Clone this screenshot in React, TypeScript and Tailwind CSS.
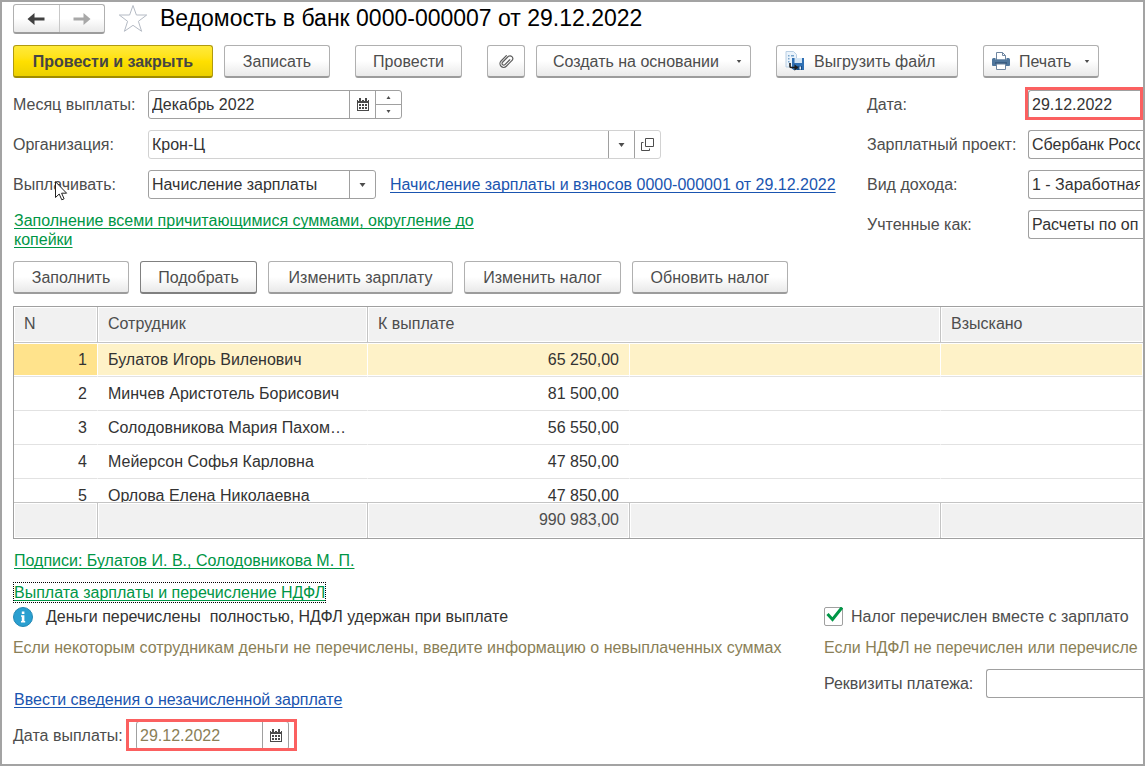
import type { ButtonHTMLAttributes, ReactNode } from 'react';
import clsx from 'clsx';

const employees = [
  { id: 1, name: 'Булатов Игорь Виленович', amount: '65 250,00' },
  { id: 2, name: 'Минчев Аристотель Борисович', amount: '81 500,00' },
  { id: 3, name: 'Солодовникова Мария Пахомовна', amount: '56 550,00' },
  { id: 4, name: 'Мейерсон Софья Карловна', amount: '47 850,00' },
  { id: 5, name: 'Орлова Елена Николаевна', amount: '47 850,00' },
];

const linkBase = 'underline decoration-1 underline-offset-2 [text-decoration-skip-ink:none]';
const greenLink = clsx(linkBase, 'text-[#009646]');
const blueLink = clsx(linkBase, 'text-[#1a55b0]');
const fieldBox = 'flex h-[29px] rounded-[3px] border border-[#a0a0a0] bg-white';
const openField = 'h-[29px] w-full min-w-0 rounded-l-[3px] border border-r-0 border-[#a0a0a0] bg-white px-[3px] outline-none';
const headCell = 'h-[36px] border-b border-[#c4c4c4] bg-[#f1f1f1] px-[10px] pb-[2px] text-left font-normal shadow-[inset_0_0_0_1px_#fff]';
const plain = 'border-[#b0b0b0] border-b-[#9c9c9c] bg-linear-to-b from-white from-50% to-[#e9e9e9]';
const active = 'border-[#808080] bg-linear-to-b from-white from-50% to-[#e9e9e9]';
const primary = 'border-[#b09a10] border-b-[#a08c00] bg-linear-to-b from-[#ffea38] via-[#ffe000] to-[#ecd000] font-bold text-[#454545]';

function ToolButton({ children, className, look = plain, ...rest }: ButtonHTMLAttributes<HTMLButtonElement> & { look?: string }) {
  return (
    <button
      type="button"
      className={clsx('flex h-[33px] shrink-0 items-center justify-center rounded-[3px] border border-b-2 whitespace-nowrap', look, className)}
      {...rest}
    >
      {children}
    </button>
  );
}

function Caret({ small }: { small?: boolean }) {
  return (
    <svg width={small ? 6 : 7} height={small ? 3 : 4} viewBox="0 0 7 4" aria-hidden="true">
      <path d="M0.5 0h6L3.5 4z" fill="#4d4d4d" />
    </svg>
  );
}

function CalendarIcon() {
  return (
    <svg width="12" height="13" viewBox="0 0 12 13" shapeRendering="crispEdges" aria-hidden="true">
      <path d="M0 2h12v11H0z" fill="#4a4a4a" />
      <path d="M1 5h10v7H1z" fill="#fff" />
      <path d="M2 0h2v2H2zM8 0h2v2H8z" fill="#4a4a4a" />
      <path d="M1 2h1v1H1zM4 2h1v1H4zM7 2h1v1H7zM10 2h1v1h-1z" fill="#fff" />
      <path d="M2 6h2v2H2zM5 6h2v2H5zM8 6h2v2H8zM2 9h2v2H2zM5 9h2v2H5zM8 9h2v2H8z" fill="#4a4a4a" />
    </svg>
  );
}

function ArrowIcon({ className }: { className: string }) {
  return (
    <svg width="18" height="14" viewBox="0 0 18 14" className={className} aria-hidden="true">
      <path d="M0.500 7l7-6v4.500h10v3h-10V13z" fill="currentColor" />
    </svg>
  );
}

function ClipIcon() {
  return (
    <svg width="18" height="18" viewBox="0 0 18 18" fill="none" stroke="#5c5c5c" strokeWidth="1.2" strokeLinecap="round" aria-hidden="true">
      <g transform="rotate(45 9 9)">
        <path d="M5.500 5v7.500a3.700 3.700 0 0 0 7.400 0V4a2.800 2.800 0 0 0-5.500 0v8.300a1.700 1.700 0 0 0 3.400 0V5.500" />
      </g>
    </svg>
  );
}

function ExportIcon() {
  return (
    <svg width="20" height="20" viewBox="0 0 20 20" aria-hidden="true">
      <path d="M1 0.500h7.500l3 3V16H1z" fill="#eaf3fb" stroke="#b9cfe4" />
      <path d="M3 4h1.500v1.500H3zM3 7h1.500v1.500H3zM3 10h1.500v1.500H3zM6 4h3v1.500H6z" fill="#7aa5cc" />
      <path d="M7 7h12v12H8.500L7 17.500z" fill="#2f6fb3" />
      <path d="M9.500 7h7.500v5H9.500z" fill="#d5e6f5" />
      <path d="M12 15h5v4h-5z" fill="#174a80" />
      <path d="M14.500 15.500h1.500v3h-1.500z" fill="#dfeaf5" />
      <path d="M5 12v3.500a1 1 0 0 0 1 1h4" fill="none" stroke="#1c1c1c" strokeWidth="1.600" />
      <path d="M9.500 13.200l3.800 3.300-3.800 3.300z" fill="#1c1c1c" />
    </svg>
  );
}

function PrinterIcon() {
  return (
    <svg width="18" height="18" viewBox="0 0 18 18" aria-hidden="true">
      <path d="M4.500 8V0.500h6l3 3V8z" fill="#fff" stroke="#6f86a0" />
      <path d="M10.500 0.500v3h3" fill="none" stroke="#6f86a0" />
      <path d="M1.500 6h2v1.500h11V6h2a1.500 1.500 0 0 1 1.500 1.500V13a1 1 0 0 1-1 1H1a1 1 0 0 1-1-1V7.500A1.500 1.500 0 0 1 1.500 6z" fill="#4f769c" />
      <path d="M3 11h12" stroke="#27476b" />
      <path d="M4.500 12h9v5.500h-9z" fill="#fff" stroke="#6f86a0" />
    </svg>
  );
}

function Field({ id, label, children }: { id: string; label: string; children: ReactNode }) {
  return (
    <div className="flex h-[29px] items-center">
      <label htmlFor={id} className="w-[135px] shrink-0 whitespace-nowrap">{label}</label>
      {children}
    </div>
  );
}

function SideField({ id, label, value, marked }: { id: string; label: string; value: string; marked?: boolean }) {
  return (
    <div className="flex h-[29px] items-center">
      <label htmlFor={id} className="w-[161px] shrink-0 whitespace-nowrap">{label}</label>
      <div className="relative min-w-0 flex-1 text-[#333]">
        <input id={id} defaultValue={value} className={openField} />
        {marked && <span className="pointer-events-none absolute -top-[3px] right-0 -bottom-px -left-[3px] border-3 border-[#fb6060]" />}
      </div>
    </div>
  );
}

export default function App() {
  return (
    <main className="relative min-h-screen overflow-hidden border-2 border-[#a3a3a3] bg-white pl-[11px] font-['Liberation_Sans',Arial,sans-serif] text-[16px] leading-[19px] text-[#4d4d4d]">
      <header className="flex h-[32px] items-start pt-[2px]">
        <div className={clsx('flex h-[30px] w-[92px] shrink-0 rounded-[3px] border border-b-2', plain)}>
          <button type="button" aria-label="Назад" className="flex flex-1 items-center justify-center border-r border-[#c8c8c8]">
            <ArrowIcon className="text-[#404040]" />
          </button>
          <button type="button" aria-label="Вперед" className="flex flex-1 items-center justify-center">
            <ArrowIcon className="rotate-180 text-[#a8a8a8]" />
          </button>
        </div>
        <button type="button" aria-label="В избранное" className="mr-3 ml-[13px]">
          <svg width="30" height="29" viewBox="0 0 30 29" fill="none" stroke="#b4bac4" aria-hidden="true">
            <path d="M15 1.500l3.400 9.500h10.300l-8.300 6.300 3.200 10L15 21.300l-8.600 6 3.200-10L1.300 11h10.300z" />
          </svg>
        </button>
        <h1 className="text-[23px] leading-[28px] whitespace-nowrap text-black">Ведомость в банк 0000-000007 от 29.12.2022</h1>
      </header>

      <div className="mt-[11px] flex">
        <ToolButton look={primary} className="w-[200px]">Провести и закрыть</ToolButton>
        <ToolButton className="ml-[11px] w-[106px]">Записать</ToolButton>
        <ToolButton className="ml-[25px] w-[107px]">Провести</ToolButton>
        <ToolButton aria-label="Присоединенные файлы" className="ml-[25px] w-[38px]">
          <ClipIcon />
        </ToolButton>
        <ToolButton className="ml-[11px] w-[215px] pr-2 pl-4">
          <span className="flex-1 text-left">Создать на основании</span>
          <Caret small />
        </ToolButton>
        <ToolButton className="ml-[25px] w-[182px] gap-[9px] px-2">
          <ExportIcon />
          <span className="flex-1 text-left">Выгрузить файл</span>
        </ToolButton>
        <ToolButton className="ml-[25px] w-[116px] gap-[9px] px-2">
          <PrinterIcon />
          <span className="flex-1 text-left">Печать</span>
          <Caret small />
        </ToolButton>
      </div>

      <section className="mt-3 grid grid-cols-[854px_minmax(0,1fr)]">
        <div className="flex flex-col gap-[11px]">
          <Field id="month" label="Месяц выплаты:">
            <div className={clsx(fieldBox, 'w-[254px] text-[#333]')}>
              <input id="month" defaultValue="Декабрь 2022" className="min-w-0 flex-1 px-[3px] outline-none" />
              <button type="button" aria-label="Выбрать месяц" className="flex w-[26px] items-center justify-center border-l border-[#a0a0a0]">
                <CalendarIcon />
              </button>
              <div className="flex w-[26px] flex-col border-l border-[#a0a0a0]">
                <button type="button" aria-label="Следующий месяц" className="flex flex-1 items-center justify-center border-b border-[#a0a0a0]">
                  <svg width="5" height="3" viewBox="0 0 5 3" aria-hidden="true"><path d="M0.500 3h4L2.500 0z" fill="#4d4d4d" /></svg>
                </button>
                <button type="button" aria-label="Предыдущий месяц" className="flex flex-1 items-center justify-center">
                  <svg width="5" height="3" viewBox="0 0 5 3" aria-hidden="true"><path d="M0.500 0h4L2.500 3z" fill="#4d4d4d" /></svg>
                </button>
              </div>
            </div>
          </Field>
          <Field id="org" label="Организация:">
            <div className="flex h-[29px] w-[513px] rounded-[3px] border border-[#d2d2d2] text-[#333]">
              <div className="relative flex-1">
                <select id="org" className="h-full w-full appearance-none px-[3px] outline-none">
                  <option>Крон-Ц</option>
                </select>
                <span className="pointer-events-none absolute inset-y-0 right-0 flex w-[26px] items-center justify-center border-l border-[#a0a0a0]">
                  <Caret />
                </span>
              </div>
              <button type="button" aria-label="Открыть организацию" className="flex w-[26px] items-center justify-center border-l border-[#a0a0a0]">
                <svg width="13" height="13" viewBox="0 0 13 13" fill="none" stroke="#4d4d4d" aria-hidden="true">
                  <path d="M4.500 0.500h8v8h-8zM2.500 4.500h-2v8h8v-2" />
                </svg>
              </button>
            </div>
          </Field>
          <Field id="pay" label="Выплачивать:">
            <div className={clsx(fieldBox, 'relative w-[228px] shrink-0 text-[#333]')}>
              <select id="pay" className="h-full w-full appearance-none px-[3px] outline-none">
                <option>Начисление зарплаты</option>
              </select>
              <span className="pointer-events-none absolute inset-y-0 right-0 flex w-[26px] items-center justify-center border-l border-[#a0a0a0]">
                <Caret />
              </span>
            </div>
            <a href="#accrual" className={clsx(blueLink, 'ml-[14px] whitespace-nowrap')}>
              Начисление зарплаты и взносов 0000-000001 от 29.12.2022
            </a>
          </Field>
          <p className="w-[500px] pt-px pl-px">
            <a href="#filling" className={greenLink}>Заполнение всеми причитающимися суммами, округление до копейки</a>
          </p>
        </div>
        <div className="flex flex-col gap-[11px]">
          <SideField id="date" label="Дата:" value="29.12.2022" marked />
          <SideField id="project" label="Зарплатный проект:" value="Сбербанк Росс" />
          <SideField id="income" label="Вид дохода:" value="1 - Заработная" />
          <SideField id="account" label="Учтенные как:" value="Расчеты по оп" />
        </div>
      </section>

      <div className="mt-3 flex gap-[11px]">
        <ToolButton className="w-[116px]">Заполнить</ToolButton>
        <ToolButton look={active} className="w-[117px]">Подобрать</ToolButton>
        <ToolButton className="w-[185px]">Изменить зарплату</ToolButton>
        <ToolButton className="w-[157px]">Изменить налог</ToolButton>
        <ToolButton className="w-[156px]">Обновить налог</ToolButton>
      </div>

      <div className="mt-3 h-[233px] overflow-hidden border border-r-0 border-[#a0a0a0]">
        <table className="w-full table-fixed border-separate border-spacing-0">
          <colgroup>
            <col className="w-[84px]" />
            <col className="w-[270px]" />
            <col className="w-[262px]" />
            <col className="w-[311px]" />
            <col />
          </colgroup>
          <thead>
            <tr>
              <th className={clsx(headCell, 'border-r')}>N</th>
              <th className={clsx(headCell, 'border-r')}>Сотрудник</th>
              <th colSpan={2} className={clsx(headCell, 'border-r')}>К выплате</th>
              <th className={headCell}>Взыскано</th>
            </tr>
          </thead>
          <tbody className="text-[#333]">
            {employees.map((row, i) => {
              const cell = clsx(
                'h-[34px] border-r border-b border-b-[#e2e2e2] border-r-white',
                i === 0 && 'bg-[#fef2c8] shadow-[inset_0_1px_0_#fff,inset_0_-1px_0_#fff]',
              );
              return (
                <tr key={row.id}>
                  <td className={clsx(cell, 'px-[10px] text-right', i === 0 && 'bg-[#ffe38c]')}>{row.id}</td>
                  <td className={clsx(cell, 'truncate pr-4 pl-[10px]')}>{row.name}</td>
                  <td className={clsx(cell, 'px-[10px] text-right')}>{row.amount}</td>
                  <td className={cell} />
                  <td className={cell} />
                </tr>
              );
            })}
          </tbody>
          <tfoot>
            <tr>
              {['', '', '990 983,00', '', ''].map((total, i) => (
                <td
                  key={i}
                  className={clsx(
                    'sticky bottom-0 h-[36px] border-t border-[#c4c4c4] bg-[#f1f1f1] px-[10px] pb-[2px] text-right shadow-[inset_0_0_0_1px_#fff]',
                    i < 4 && 'border-r',
                  )}
                >
                  {total}
                </td>
              ))}
            </tr>
          </tfoot>
        </table>
      </div>

      <p className="mt-3 pl-px">
        <a href="#signatures" className={greenLink}>Подписи: Булатов И. В., Солодовникова М. П.</a>
      </p>
      <p className="mt-3 flex">
        <a href="#ndfl" className={clsx(greenLink, 'border border-dotted border-black')}>Выплата зарплаты и перечисление НДФЛ</a>
      </p>

      <section className="mt-[3px] grid grid-cols-[811px_minmax(0,1fr)]">
        <div>
          <div className="flex h-[21px] items-center gap-[13px] text-[#333]">
            <svg width="20" height="20" viewBox="0 0 20 20" aria-hidden="true">
              <circle cx="10" cy="10" r="9.500" fill="#2a9fd0" stroke="#2488b4" />
              <path d="M8.800 4.500h2.600v2.400H8.800zM8 8.300h3.400v5.700h.8v1.500H8V14h.8V9.800H8z" fill="#fff" />
            </svg>
            <span className="whitespace-pre">Деньги перечислены  полностью, НДФЛ удержан при выплате</span>
          </div>
          <p className="mt-[11px] whitespace-nowrap text-[#8a7f57]">
            Если некоторым сотрудникам деньги не перечислены, введите информацию о невыплаченных суммах
          </p>
          <p className="mt-[33px] pl-px">
            <a href="#unpaid" className={blueLink}>Ввести сведения о незачисленной зарплате</a>
          </p>
          <div className="mt-3 flex h-[29px] items-center">
            <label htmlFor="paydate" className="w-[123px] shrink-0 whitespace-nowrap">Дата выплаты:</label>
            <div className={clsx(fieldBox, 'relative w-[153px] text-[#8a7f57]')}>
              <input id="paydate" defaultValue="29.12.2022" className="min-w-0 flex-1 px-[3px] outline-none" />
              <button type="button" aria-label="Выбрать дату" className="flex w-[26px] items-center justify-center border-l border-[#a0a0a0]">
                <CalendarIcon />
              </button>
              <span className="pointer-events-none absolute -top-[3px] -right-[9px] -bottom-[2px] -left-[11px] border-3 border-[#fb6060]" />
            </div>
          </div>
        </div>
        <div className="overflow-hidden">
          <label className="flex h-[21px] items-center gap-2 whitespace-nowrap">
            <span className="relative size-[19px] shrink-0">
              <input type="checkbox" defaultChecked className="block size-[19px] appearance-none rounded-[2px] border border-[#a0a0a0]" />
              <svg width="19" height="19" viewBox="0 0 19 19" className="pointer-events-none absolute inset-0" fill="none" stroke="#009646" strokeWidth="3" aria-hidden="true">
                <path d="M3.500 7l5 5.500L18 0.500" />
              </svg>
            </span>
            Налог перечислен вместе с зарплато
          </label>
          <p className="mt-[11px] whitespace-nowrap text-[#8a7f57]">Если НДФЛ не перечислен или перечисле</p>
          <div className="mt-3 flex h-[29px] items-center">
            <label htmlFor="details" className="w-[162px] shrink-0 whitespace-nowrap">Реквизиты платежа:</label>
            <input id="details" className={openField} />
          </div>
        </div>
      </section>

      {/* mouse pointer */}
      <svg width="13" height="20" viewBox="0 0 13 20" className="pointer-events-none absolute top-[179px] left-[53px]" aria-hidden="true">
        <path d="M0.500 0.700v15.800l3.700-3.500 2.600 5.800 2.300-1-2.500-5.600h5z" fill="#fff" stroke="#222" />
      </svg>
    </main>
  );
}
